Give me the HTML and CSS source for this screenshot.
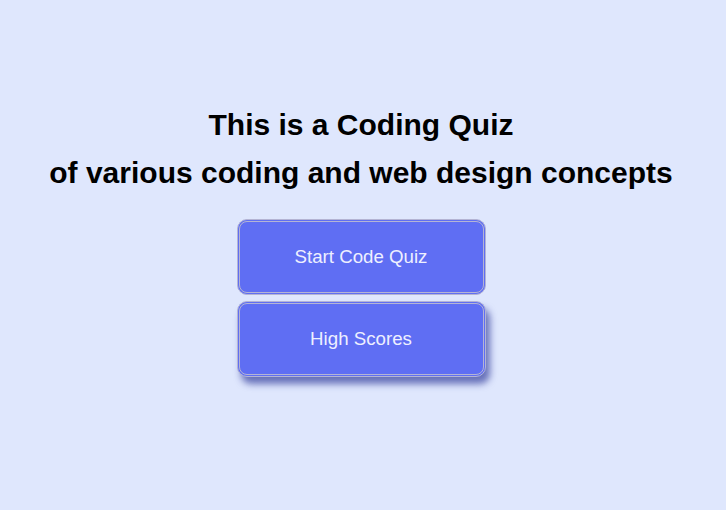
FILE: index.html
```html
<!DOCTYPE html>
<html>
<head>
<meta charset="utf-8">
<link rel="stylesheet" href="styles.css">
</head>
<body>
<main class="intro">
  <h1 class="title">This is a Coding Quiz<br>of various coding and web design concepts</h1>
  <div class="actions">
    <button class="btn">Start Code Quiz</button>
    <button class="btn btn-hover">High Scores</button>
  </div>
</main>
</body>
</html>
```
FILE: styles.css
```css
html, body {
  margin: 0;
  padding: 0;
  background: #dfe7fd;
  font-family: "Liberation Sans", Arial, sans-serif;
}
.intro {
  display: flex;
  flex-direction: column;
  align-items: center;
  padding-top: 101px;
  padding-right: 4px;
  padding-bottom: 40px;
}
.title {
  margin: 0;
  font-size: 30px;
  font-weight: bold;
  line-height: 48px;
  text-align: center;
  color: #000;
}
.actions {
  display: flex;
  flex-direction: column;
  align-items: center;
  gap: 6px;
  margin-top: 22px;
}
.btn {
  box-sizing: border-box;
  width: 249px;
  height: 76px;
  background: #5f6ef3;
  color: #eef0ff;
  font-family: "Liberation Sans", Arial, sans-serif;
  font-size: 18.7px;
  border: 3px double #b4b4d4;
  border-radius: 10px;
}
.btn-hover {
  box-shadow: 4px 7px 7px rgba(40, 50, 150, 0.65);
}
```
